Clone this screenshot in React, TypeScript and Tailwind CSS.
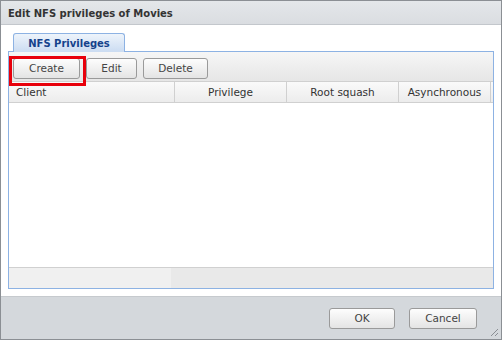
const font = { fontFamily: '"DejaVu Sans", Verdana, sans-serif' };

const Btn = ({ label, w }: { label: string; w: string }) => (
  <button
    className={`${w} h-[21px] rounded-[3px] border border-[#9a9a9a] bg-gradient-to-b from-[#fdfdfd] to-[#e4e4e4] text-[10.5px] text-[#444] leading-none`}
  >
    {label}
  </button>
);

const columns = [
  { label: 'Client', w: 'w-[166px]', align: 'justify-start pl-[7px]' },
  { label: 'Privilege', w: 'w-[112px]', align: 'justify-center' },
  { label: 'Root squash', w: 'w-[112px]', align: 'justify-center' },
  { label: 'Asynchronous', w: 'w-[92px]', align: 'justify-center' },
];

export default function App() {
  return (
    <div
      className="w-[502px] h-[340px] relative flex flex-col border border-[#8b8f94] bg-white text-[#333]"
      style={font}
    >
      {/* title bar */}
      <div className="h-[24px] shrink-0 flex items-center pt-[2px] px-[7px] bg-gradient-to-b from-[#e4e7ea] to-[#dadde1] border-b border-[#c3c7cc] text-[10px] font-bold text-[#333]">
        Edit NFS privileges of Movies
      </div>

      {/* body */}
      <div className="flex-1 flex flex-col px-[7px] pt-[8px] pb-[7px] bg-white">
        <div className="flex pl-[5px] h-[18px] relative z-10">
          <div className="w-[112px] h-[19px] pt-[1px] rounded-t-[3px] border border-b-0 border-[#8db2e3] bg-gradient-to-b from-[#eef4fb] to-[#cbdcf2] flex items-center justify-center text-[10px] font-bold text-[#15428b]">
            NFS Privileges
          </div>
        </div>
        <div className="flex-1 flex flex-col border border-[#8db2e3]">
          {/* toolbar */}
          <div className="h-[30px] shrink-0 flex items-start gap-[6px] pl-[4px] pt-[6px] bg-gradient-to-b from-[#f6f6f6] to-[#e6e6e6] border-b border-[#d0d0d0]">
            <Btn label="Create" w="w-[67px]" />
            <Btn label="Edit" w="w-[51px]" />
            <Btn label="Delete" w="w-[65px]" />
          </div>
          {/* header */}
          <div className="h-[21px] shrink-0 flex bg-gradient-to-b from-[#fafafa] to-[#ececec] border-b border-[#d0d0d0]">
            {columns.map((c) => (
              <div
                key={c.label}
                className={`${c.w} h-full flex items-center pt-[1px] ${c.align} border-r border-[#d0d0d0] text-[10.5px] text-[#333]`}
              >
                {c.label}
              </div>
            ))}
          </div>
          {/* rows */}
          <div className="flex-1 bg-white border-b border-[#d0d0d0]" />
          {/* scroll area */}
          <div className="h-[20px] shrink-0 flex bg-[#ececec]">
            <div className="w-[162px] bg-[#f0f0f0]" />
            <div className="flex-1 bg-[#e9e9e9]" />
          </div>
        </div>
      </div>

      {/* footer */}
      <div className="h-[43px] shrink-0 flex items-center justify-end gap-[14px] pr-[24px] bg-[#d4d8dc] border-t border-[#c6cace]">
        <Btn label="OK" w="w-[66px]" />
        <Btn label="Cancel" w="w-[68px]" />
      </div>

      {/* resize grip */}
      <svg className="absolute right-[2px] bottom-[2px]" width="10" height="10" viewBox="0 0 10 10">
        <line x1="2" y1="9" x2="9" y2="2" stroke="#8a8e93" strokeWidth="1" />
        <line x1="6" y1="9" x2="9" y2="6" stroke="#8a8e93" strokeWidth="1" />
      </svg>

      {/* highlight annotation */}
      <div className="absolute left-[8px] top-[55px] w-[77px] h-[30px] border-[3px] border-[#e8000b] pointer-events-none" />
    </div>
  );
}
